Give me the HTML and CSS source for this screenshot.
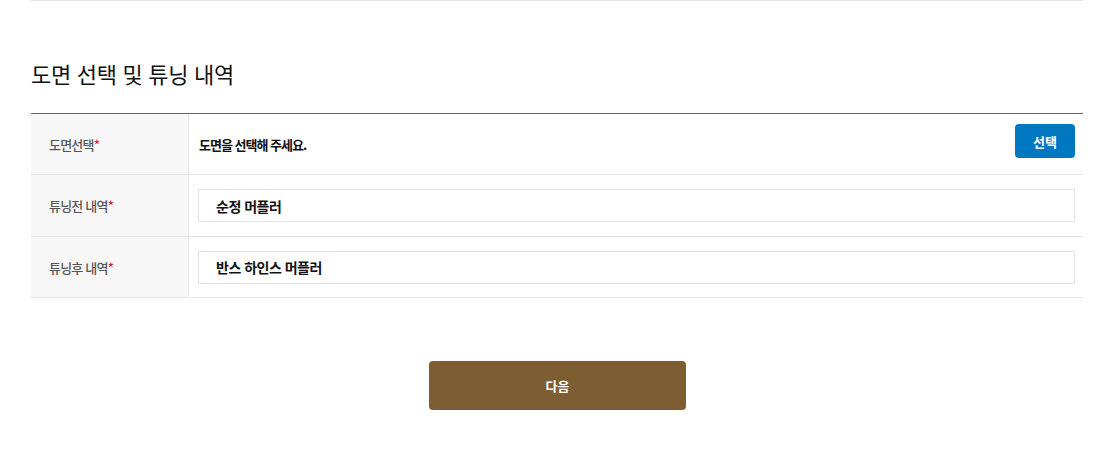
FILE: index.html
```html
<!DOCTYPE html>
<html lang="ko">
<head>
<meta charset="utf-8">
<link rel="stylesheet" href="styles.css">
</head>
<body>
<div class="wrap">
  <div class="topline"></div>
  <h2 class="title">도면 선택 및 튜닝 내역</h2>
  <div class="table">
    <div class="row">
      <div class="label">도면선택<span class="req">*</span></div>
      <div class="cell cell-select">
        <span class="placeholder">도면을 선택해 주세요.</span>
        <button class="btn-select" type="button">선택</button>
      </div>
    </div>
    <div class="row row-mid">
      <div class="label">튜닝전 내역<span class="req">*</span></div>
      <div class="cell">
        <div class="input">순정 머플러</div>
      </div>
    </div>
    <div class="row">
      <div class="label">튜닝후 내역<span class="req">*</span></div>
      <div class="cell">
        <div class="input">반스 하인스 머플러</div>
      </div>
    </div>
  </div>
  <div class="actions">
    <button class="btn-next" type="button">다음</button>
  </div>
</div>
</body>
</html>
```

FILE: styles.css
```css
* { box-sizing: border-box; }
html, body { margin: 0; padding: 0; background: #fff; }
body {
  font-family: "Noto Sans CJK KR", "Noto Sans", sans-serif;
  color: #111;
}
.wrap {
  width: 1052px;
  margin-left: 31px;
}
.topline {
  height: 1px;
  background: #e5e5e5;
}
.title {
  margin: 55px 0 0;
  height: 57px;
  font-size: 22px;
  font-weight: 400;
  line-height: 34px;
  color: #111;
  letter-spacing: -0.3px;
}
.table {
  border-top: 1px solid #666;
}
.row {
  display: grid;
  grid-template-columns: 158px 1fr;
  border-bottom: 1px solid #e5e5e5;
  height: 61px;
}
.row-mid { height: 62px; }
.label {
  background: #f7f7f7;
  border-right: 1px solid #e5e5e5;
  display: flex;
  align-items: center;
  padding-left: 18px;
  font-size: 13px;
  font-weight: 500;
  color: #555;
  letter-spacing: -0.8px;
}
.req { color: #d6243a; }
.cell {
  display: flex;
  align-items: center;
  padding: 0 8px 0 9px;
}
.cell-select {
  justify-content: space-between;
  align-items: flex-start;
  padding-top: 10px;
}
.placeholder {
  font-size: 13px;
  font-weight: 700;
  letter-spacing: -1px;
  color: #111;
  line-height: 19px;
  margin-top: 11px;
  margin-left: 1px;
}
.btn-select {
  width: 60px;
  height: 34px;
  border: 0;
  border-radius: 4px;
  background: #0078c1;
  color: #fff;
  font-family: inherit;
  font-size: 13px;
  font-weight: 700;
}
.input {
  flex: 1;
  height: 33px;
  border: 1px solid #e5e5e5;
  display: flex;
  align-items: center;
  padding-left: 17px;
  font-size: 14px;
  font-weight: 700;
  letter-spacing: -0.5px;
  color: #111;
}
.actions {
  display: flex;
  justify-content: center;
  padding-top: 63px;
}
.btn-next {
  width: 257px;
  height: 49px;
  border: 0;
  border-radius: 4px;
  background: #7d5e33;
  color: #fff;
  font-family: inherit;
  font-size: 13px;
  font-weight: 700;
  margin-left: 1px;
}
```
